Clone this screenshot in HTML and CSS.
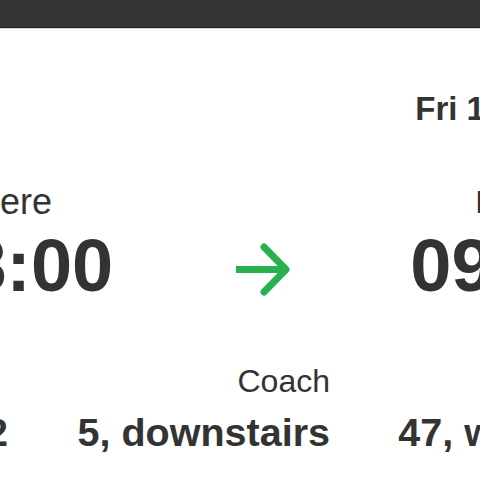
FILE: index.html
```html
<!DOCTYPE html>
<html lang="en">

<head>
    <meta charset="UTF-8">
    <meta name="viewport" content="width=device-width, initial-scale=1.0">
    <link rel="stylesheet" href="styles.css">
    <title>Your ticket</title>
</head>

<body>
    <header class="topbar"></header>
    <main class="ticket">
        <section class="journey">
            <div class="stop stop-start">
                <p class="label">from here</p>
                <p class="time">08:00</p>
            </div>
            <svg class="arrow" width="54" height="54" viewBox="0 0 54 54" fill="none">
                <path d="M0 26.5H49" stroke-linecap="butt" />
                <path d="M28 4L50 26.5L28 49" stroke-linecap="round" stroke-linejoin="round" />
            </svg>
            <div class="stop stop-end">
                <p class="date">Fri 17 May</p>
                <p class="label">Brighton</p>
                <p class="time">09:45</p>
            </div>
        </section>
        <section class="details">
            <div class="detail detail-first">
                <p class="label">Platform</p>
                <p class="value">2</p>
            </div>
            <div class="detail">
                <p class="label">Coach</p>
                <p class="value">5, downstairs</p>
            </div>
            <div class="detail detail-last">
                <p class="label">Seat</p>
                <p class="value">47, window</p>
            </div>
        </section>
    </main>
</body>

</html>
```

FILE: styles.css
```css
:root {
    --font: 'Liberation Sans', Arial, sans-serif;
    --bar: #333333;
    --text: #333333;
    --green: #2bb04f;
}

body {
    margin: 0;
    background-color: #ffffff;
    color: var(--text);
    font-family: var(--font);
    overflow: hidden;
}

p {
    margin: 0;
    line-height: 1;
    white-space: nowrap;
}

.topbar {
    height: 27px;
    background-color: var(--bar);
    border-bottom: 1px solid #1e1e1e;
    box-shadow: 0 1px 0 #d6d6d6;
}

.ticket {
    margin-left: -76px;
    padding-top: 64px;
    width: 720px;
}

.journey {
    display: flex;
    align-items: flex-end;
    gap: 123px;
}

.stop {
    display: flex;
    flex-direction: column;
    align-items: flex-end;
    gap: 11px;
}

.stop-start {
    align-items: flex-start;
}

.stop-start .label {
    font-size: 36px;
    margin-left: -26px;
    margin-bottom: -2px;
}

.stop-end {
    margin-left: -3px;
}

.stop-end .label {
    margin-right: 5px;
}

.date {
    align-self: flex-start;
    font-size: 33px;
    font-weight: 700;
    margin-left: 5px;
    margin-bottom: 50px;
}

.label {
    font-size: 32px;
}

.time {
    font-size: 74px;
    font-weight: 700;
}

.arrow {
    flex: none;
    margin-bottom: 6px;
    stroke: var(--green);
    stroke-width: 7;
}

.details {
    display: grid;
    grid-template-columns: 139px 256px 214px;
    column-gap: 65px;
    margin-top: 62px;
    margin-left: -54px;
}

.detail {
    display: flex;
    flex-direction: column;
    align-items: flex-end;
    gap: 16px;
}

.detail-first {
    align-items: flex-start;
}

.detail-first .value {
    align-self: flex-end;
    margin-right: 1px;
}

.detail-last {
    margin-left: 4px;
}

.value {
    font-size: 39.5px;
    font-weight: 700;
}
```
